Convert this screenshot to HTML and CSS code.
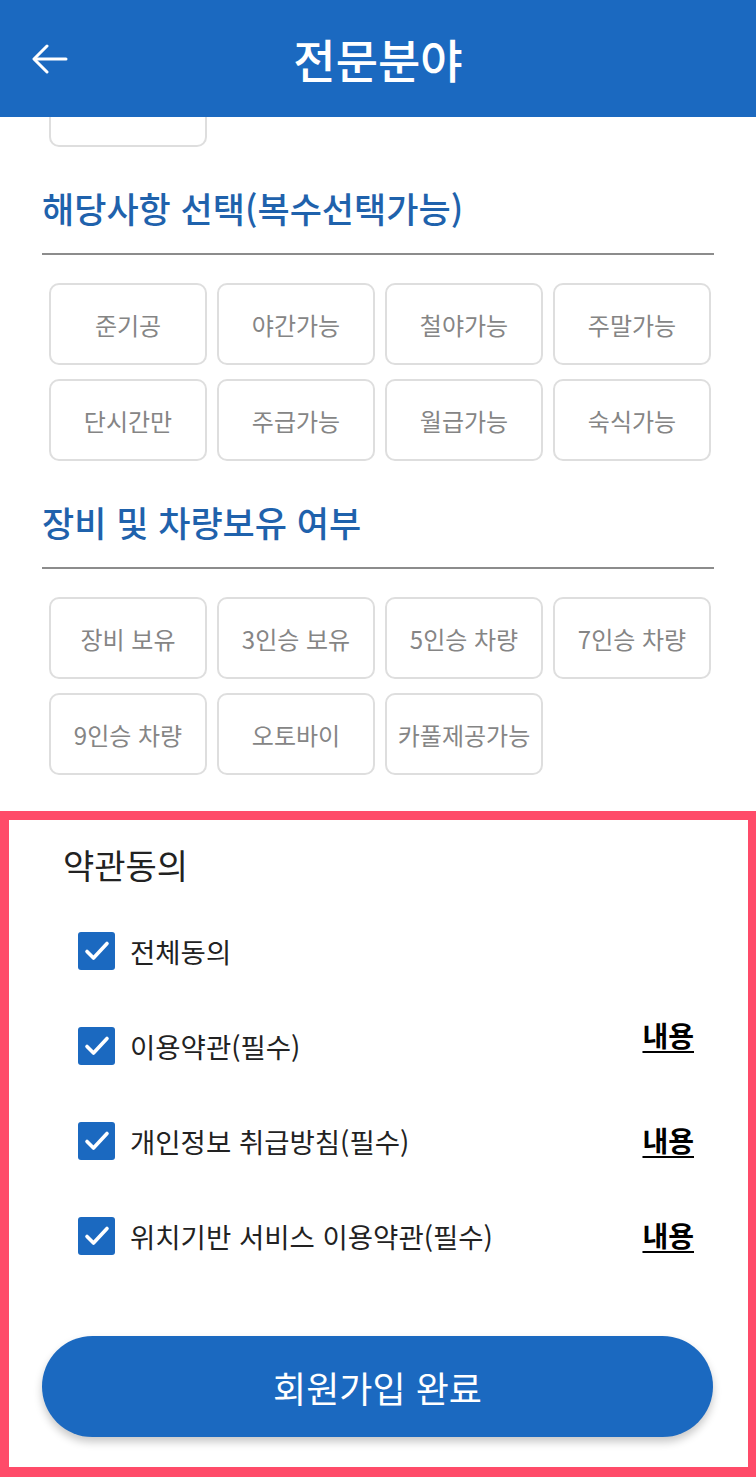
FILE: index.html
```html
<!DOCTYPE html>
<html lang="ko">
  <head>
    <meta charset="UTF-8" />
    <meta name="viewport" content="width=device-width, initial-scale=1.0" />
    <title>전문분야</title>
    <link rel="stylesheet" href="styles.css">
  </head>
  <body>
    <header class="topbar">
      <button class="back-btn" aria-label="뒤로">
        <svg width="36" height="30" viewBox="0 0 36 30" fill="none" stroke="#fff" stroke-width="3" stroke-linecap="round" stroke-linejoin="round">
          <path d="M34 15H3" />
          <path d="M15 2L2 15L15 28" />
        </svg>
      </button>
      <h1 class="title">전문분야</h1>
    </header>

    <main class="content">
      <div class="scrolled">
        <!-- 위쪽 목록의 마지막 칸 (스크롤로 잘림) -->
        <div class="chips">
          <div class="chip"></div>
        </div>

        <section class="section">
          <h2 class="section-title">해당사항 선택(복수선택가능)</h2>
          <div class="chips">
            <div class="chip">준기공</div>
            <div class="chip">야간가능</div>
            <div class="chip">철야가능</div>
            <div class="chip">주말가능</div>
            <div class="chip">단시간만</div>
            <div class="chip">주급가능</div>
            <div class="chip">월급가능</div>
            <div class="chip">숙식가능</div>
          </div>
        </section>

        <section class="section">
          <h2 class="section-title">장비 및 차량보유 여부</h2>
          <div class="chips">
            <div class="chip">장비 보유</div>
            <div class="chip">3인승 보유</div>
            <div class="chip">5인승 차량</div>
            <div class="chip">7인승 차량</div>
            <div class="chip">9인승 차량</div>
            <div class="chip">오토바이</div>
            <div class="chip">카풀제공가능</div>
          </div>
        </section>
      </div>

      <section class="terms">
        <h3 class="terms-title">약관동의</h3>
        <ul class="terms-list">
          <li class="term">
            <span class="checkbox"><svg width="26" height="22" viewBox="0 0 26 22" fill="none" stroke="#fff" stroke-width="3.6" stroke-linecap="round" stroke-linejoin="round"><path d="M3 11.5L9.5 18L23 3.5" /></svg></span>
            <span class="term-label">전체동의</span>
          </li>
          <li class="term">
            <span class="checkbox"><svg width="26" height="22" viewBox="0 0 26 22" fill="none" stroke="#fff" stroke-width="3.6" stroke-linecap="round" stroke-linejoin="round"><path d="M3 11.5L9.5 18L23 3.5" /></svg></span>
            <span class="term-label">이용약관(필수)</span>
            <a class="term-link term-link-up" href="#">내용</a>
          </li>
          <li class="term">
            <span class="checkbox"><svg width="26" height="22" viewBox="0 0 26 22" fill="none" stroke="#fff" stroke-width="3.6" stroke-linecap="round" stroke-linejoin="round"><path d="M3 11.5L9.5 18L23 3.5" /></svg></span>
            <span class="term-label">개인정보 취급방침(필수)</span>
            <a class="term-link" href="#">내용</a>
          </li>
          <li class="term">
            <span class="checkbox"><svg width="26" height="22" viewBox="0 0 26 22" fill="none" stroke="#fff" stroke-width="3.6" stroke-linecap="round" stroke-linejoin="round"><path d="M3 11.5L9.5 18L23 3.5" /></svg></span>
            <span class="term-label">위치기반 서비스 이용약관(필수)</span>
            <a class="term-link" href="#">내용</a>
          </li>
        </ul>
        <button class="submit-btn">회원가입 완료</button>
      </section>
    </main>
  </body>
</html>
```

FILE: styles.css
```css
* {
  box-sizing: border-box;
}

body {
  margin: 0;
  width: 756px;
  height: 1478px;
  overflow: hidden;
  background: #fff;
  font-family: "Noto Sans CJK KR", "Noto Sans", sans-serif;
}

.topbar {
  height: 117px;
  background: #1b69c0;
  display: flex;
  align-items: center;
  justify-content: center;
  position: relative;
  z-index: 2;
}

.back-btn {
  position: absolute;
  left: 32px;
  top: 44px;
  padding: 0;
  border: 0;
  background: none;
  display: flex;
}

.title {
  margin: 0;
  color: #fff;
  font-size: 46px;
  font-weight: 500;
  line-height: 1;
  padding-bottom: 2px;
}

.content {
  overflow: hidden;
}

.scrolled {
  margin-top: -52px;
  padding: 0 42px 36px;
}

.section {
  margin-top: 43px;
}

.section-title {
  margin: 0;
  color: #1f62ac;
  font-size: 35px;
  font-weight: 500;
  line-height: 36px;
  padding-bottom: 27px;
  border-bottom: 2px solid #8c8c8c;
}

.section .chips {
  margin-top: 28px;
}

.chips {
  display: grid;
  grid-template-columns: repeat(4, 158px);
  gap: 14px 10px;
  margin-left: 7px;
}

.chip {
  height: 82px;
  border: 2px solid #dedede;
  border-radius: 10px;
  display: flex;
  align-items: center;
  justify-content: center;
  color: #858585;
  font-size: 24px;
}

.terms {
  border: 9px solid #ff4b69;
  border-right-width: 8px;
  border-bottom-width: 10px;
  height: 666px;
  padding: 27px 34px 0 33px;
}

.terms-title {
  margin: 0 0 49px 21px;
  font-size: 34px;
  font-weight: 400;
  line-height: 36px;
  color: #222;
}

.terms-list {
  list-style: none;
  margin: 0;
  padding: 0 20px 0 36px;
  display: flex;
  flex-direction: column;
  gap: 58px;
}

.term {
  display: flex;
  align-items: center;
  gap: 15px;
  height: 37px;
}

.checkbox {
  width: 37px;
  height: 38px;
  border-radius: 3px;
  background: #1b69c0;
  display: flex;
  align-items: center;
  justify-content: center;
  flex-shrink: 0;
}

.term-label {
  font-size: 27.5px;
  color: #222;
}

.term-link {
  margin-left: auto;
  font-size: 28px;
  font-weight: 700;
  line-height: 1.1;
  color: #000;
  text-decoration: underline;
  text-underline-offset: 4px;
  text-decoration-thickness: 2px;
}

.term-link-up {
  margin-top: -20px;
}

.submit-btn {
  display: block;
  width: 671px;
  height: 101px;
  margin-top: 82px;
  border: 0;
  border-radius: 51px;
  background: #1b69c0;
  color: #fff;
  font-family: inherit;
  font-size: 36px;
  font-weight: 400;
  box-shadow: 0 5px 8px rgba(0, 0, 0, 0.22);
}
```
